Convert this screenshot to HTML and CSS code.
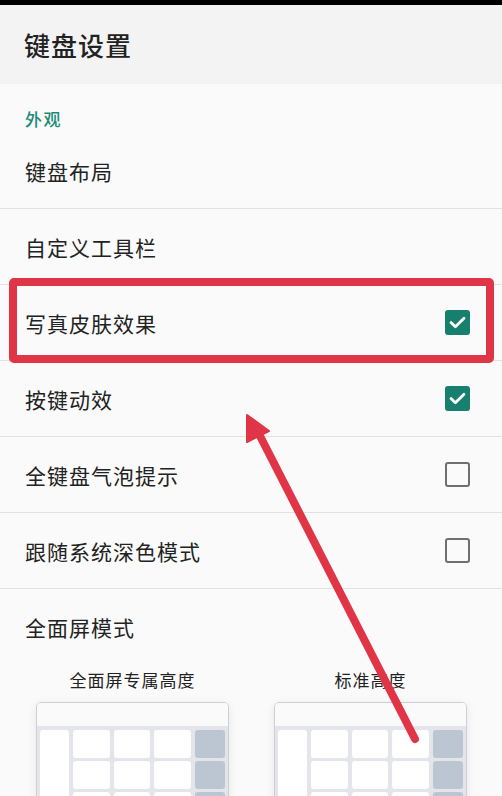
FILE: index.html
```html
<!DOCTYPE html>
<html lang="zh-CN">
<head>
<meta charset="utf-8">
<title>键盘设置</title>
<link rel="stylesheet" href="styles.css">
</head>
<body>
<div class="statusbar"></div>
<header class="appbar"><h1 class="title">键盘设置</h1></header>
<main class="list">
  <div class="category">外观</div>
  <div class="row"><span class="label">键盘布局</span></div>
  <div class="row"><span class="label">自定义工具栏</span></div>
  <div class="row highlighted">
    <span class="label">写真皮肤效果</span>
    <span class="checkbox checked"><svg viewBox="0 0 25 25" width="25" height="25"><path d="M6 12.6 L10.4 16.8 L19 8.2" fill="none" stroke="#fff" stroke-width="2.8" stroke-linecap="round" stroke-linejoin="round"/></svg></span>
    <span class="mark-box"></span>
  </div>
  <div class="row">
    <span class="label">按键动效</span>
    <span class="checkbox checked"><svg viewBox="0 0 25 25" width="25" height="25"><path d="M6 12.6 L10.4 16.8 L19 8.2" fill="none" stroke="#fff" stroke-width="2.8" stroke-linecap="round" stroke-linejoin="round"/></svg></span>
  </div>
  <div class="row">
    <span class="label">全键盘气泡提示</span>
    <span class="checkbox"></span>
  </div>
  <div class="row">
    <span class="label">跟随系统深色模式</span>
    <span class="checkbox"></span>
  </div>
  <div class="row plain"><span class="label">全面屏模式</span></div>
  <div class="options">
    <div class="option">
      <div class="option-label">全面屏专属高度</div>
      <div class="card">
        <div class="card-top"></div>
        <div class="kb">
          <div class="key tall"></div>
          <div class="key"></div><div class="key"></div><div class="key"></div><div class="key dark"></div>
          <div class="key"></div><div class="key"></div><div class="key"></div><div class="key dark"></div>
          <div class="key"></div><div class="key"></div><div class="key"></div><div class="key dark"></div>
        </div>
      </div>
    </div>
    <div class="option">
      <div class="option-label">标准高度</div>
      <div class="card">
        <div class="card-top"></div>
        <div class="kb">
          <div class="key tall"></div>
          <div class="key"></div><div class="key"></div><div class="key"></div><div class="key dark"></div>
          <div class="key"></div><div class="key"></div><div class="key"></div><div class="key dark"></div>
          <div class="key"></div><div class="key"></div><div class="key"></div><div class="key dark"></div>
        </div>
      </div>
    </div>
  </div>
</main>
<svg class="arrow" width="502" height="796" viewBox="0 0 502 796">
  <line x1="415" y1="739" x2="259" y2="434" stroke="#e03546" stroke-width="8" stroke-linecap="round"/>
  <polygon points="247,415 269,431 247,442" fill="#e03546" stroke="#e03546" stroke-width="2" stroke-linejoin="round"/>
</svg>
</body>
</html>
```
FILE: styles.css
```css
* { box-sizing: border-box; }
html, body {
  margin: 0;
  padding: 0;
  background: #fafafa;
  font-family: "Noto Sans CJK SC", "Noto Sans", sans-serif;
  color: #222;
  width: 502px;
  height: 796px;
  overflow: hidden;
}
body { position: relative; }
.statusbar { height: 5px; background: #000; }
.appbar {
  height: 79px;
  background: #f3f3f3;
  display: flex;
  align-items: center;
  padding-left: 24px;
}
.title {
  margin: 0;
  font-size: 26px;
  font-weight: 500;
  letter-spacing: 1px;
  line-height: 30px;
  color: #222;
}
.category {
  height: 49px;
  padding: 23px 0 0 25px;
  font-size: 17px;
  line-height: 24px;
  letter-spacing: 1.5px;
  color: #1b8a73;
  font-weight: 500;
}
.row {
  position: relative;
  height: 76px;
  display: flex;
  align-items: center;
  justify-content: space-between;
  padding: 0 32px 0 25px;
  border-bottom: 1px solid #e2e2e2;
}
.row.plain { border-bottom: none; }
.label {
  font-size: 21px;
  letter-spacing: 1px;
  line-height: 28px;
  color: #222;
}
.checkbox {
  width: 25px;
  height: 25px;
  border-radius: 3px;
  border: 2.5px solid #6f6f6f;
  display: flex;
}
.checkbox.checked {
  border: none;
  background: #177f6d;
}
.mark-box {
  position: absolute;
  left: 9px;
  right: 8px;
  top: -7px;
  bottom: -3px;
  border: 8px solid #e03546;
  border-radius: 5px;
}
.options {
  display: grid;
  grid-template-columns: 193px 193px;
  column-gap: 45px;
  padding: 3px 0 0 36px;
}
.option-label {
  text-align: center;
  font-size: 17px;
  letter-spacing: 1px;
  line-height: 24px;
  color: #222;
  margin-bottom: 10px;
}
.card {
  border: 1px solid #cdcfd3;
  border-radius: 5px;
  overflow: hidden;
  background: #fafafa;
  box-shadow: 0 2px 10px rgba(0, 0, 0, 0.08);
}
.card-top { height: 23px; background: #fafafa; }
.kb {
  background: #e3e5ea;
  padding: 4px 3px 4px 3px;
  display: grid;
  grid-template-columns: 29px 1fr 1fr 1fr 30px;
  grid-auto-rows: 28px;
  gap: 3px 4px;
}
.key { background: #fff; border-radius: 3px; }
.key.tall { grid-row: span 3; border-radius: 3px 3px 0 0; }
.key.dark { background: #bcc5d2; }
.arrow {
  position: absolute;
  left: 0;
  top: 0;
  pointer-events: none;
}
```
